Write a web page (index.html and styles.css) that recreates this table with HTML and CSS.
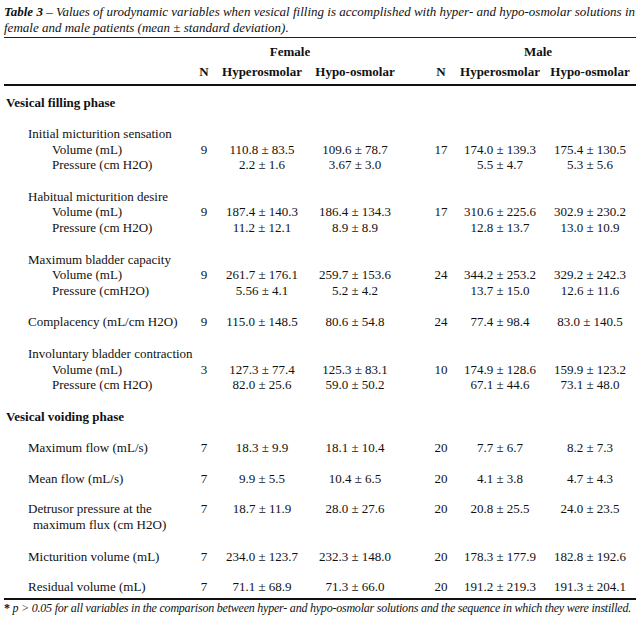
FILE: index.html
```html
<!DOCTYPE html>
<html lang="en">
<head>
<meta charset="utf-8">
<title>Table 3</title>
<link rel="stylesheet" href="styles.css">
</head>
<body>
<div class="page">
  <p class="caption"><b>Table 3</b> – Values of urodynamic variables when vesical filling is accomplished with hyper- and hypo-osmolar solutions in female and male patients (mean ± standard deviation).</p>
  <table class="data">
    <colgroup>
      <col class="c-label"><col class="c-n"><col class="c-hyper"><col class="c-hypo"><col class="c-sp"><col class="c-n2"><col class="c-hyper2"><col class="c-hypo2">
    </colgroup>
    <thead>
      <tr class="h1">
        <th></th>
        <th class="female" colspan="3">Female</th>
        <th></th>
        <th class="male" colspan="3">Male</th>
      </tr>
      <tr class="h2">
        <th></th>
        <th>N</th><th>Hyperosmolar</th><th>Hypo-osmolar</th>
        <th></th>
        <th>N</th><th>Hyperosmolar</th><th>Hypo-osmolar</th>
      </tr>
    </thead>
    <tbody>
      <tr class="section first"><td colspan="8">Vesical filling phase</td></tr>

      <tr class="start"><td class="grp" colspan="8">Initial micturition sensation</td></tr>
      <tr><td class="sub">Volume (mL)</td><td>9</td><td>110.8 ± 83.5</td><td>109.6 ± 78.7</td><td></td><td>17</td><td>174.0 ± 139.3</td><td>175.4 ± 130.5</td></tr>
      <tr><td class="sub">Pressure (cm H2O)</td><td></td><td>2.2 ± 1.6</td><td>3.67 ± 3.0</td><td></td><td></td><td>5.5 ± 4.7</td><td>5.3 ± 5.6</td></tr>

      <tr class="start"><td class="grp" colspan="8">Habitual micturition desire</td></tr>
      <tr><td class="sub">Volume (mL)</td><td>9</td><td>187.4 ± 140.3</td><td>186.4 ± 134.3</td><td></td><td>17</td><td>310.6 ± 225.6</td><td>302.9 ± 230.2</td></tr>
      <tr><td class="sub">Pressure (cm H2O)</td><td></td><td>11.2 ± 12.1</td><td>8.9 ± 8.9</td><td></td><td></td><td>12.8 ± 13.7</td><td>13.0 ± 10.9</td></tr>

      <tr class="start"><td class="grp" colspan="8">Maximum bladder capacity</td></tr>
      <tr><td class="sub">Volume (mL)</td><td>9</td><td>261.7 ± 176.1</td><td>259.7 ± 153.6</td><td></td><td>24</td><td>344.2 ± 253.2</td><td>329.2 ± 242.3</td></tr>
      <tr><td class="sub">Pressure (cmH2O)</td><td></td><td>5.56 ± 4.1</td><td>5.2 ± 4.2</td><td></td><td></td><td>13.7 ± 15.0</td><td>12.6 ± 11.6</td></tr>

      <tr class="start"><td class="grp">Complacency (mL/cm H2O)</td><td>9</td><td>115.0 ± 148.5</td><td>80.6 ± 54.8</td><td></td><td>24</td><td>77.4 ± 98.4</td><td>83.0 ± 140.5</td></tr>

      <tr class="start"><td class="grp" colspan="8">Involuntary bladder contraction</td></tr>
      <tr><td class="sub">Volume (mL)</td><td>3</td><td>127.3 ± 77.4</td><td>125.3 ± 83.1</td><td></td><td>10</td><td>174.9 ± 128.6</td><td>159.9 ± 123.2</td></tr>
      <tr><td class="sub">Pressure (cm H2O)</td><td></td><td>82.0 ± 25.6</td><td>59.0 ± 50.2</td><td></td><td></td><td>67.1 ± 44.6</td><td>73.1 ± 48.0</td></tr>

      <tr class="section start"><td colspan="8">Vesical voiding phase</td></tr>

      <tr class="start"><td class="grp">Maximum flow (mL/s)</td><td>7</td><td>18.3 ± 9.9</td><td>18.1 ± 10.4</td><td></td><td>20</td><td>7.7 ± 6.7</td><td>8.2 ± 7.3</td></tr>
      <tr class="tight"><td class="grp">Mean flow (mL/s)</td><td>7</td><td>9.9 ± 5.5</td><td>10.4 ± 6.5</td><td></td><td>20</td><td>4.1 ± 3.8</td><td>4.7 ± 4.3</td></tr>
      <tr class="tight"><td class="grp hang">Detrusor pressure at the<br>maximum flux (cm H2O)</td><td>7</td><td>18.7 ± 11.9</td><td>28.0 ± 27.6</td><td></td><td>20</td><td>20.8 ± 25.5</td><td>24.0 ± 23.5</td></tr>
      <tr class="tight"><td class="grp">Micturition volume (mL)</td><td>7</td><td>234.0 ± 123.7</td><td>232.3 ± 148.0</td><td></td><td>20</td><td>178.3 ± 177.9</td><td>182.8 ± 192.6</td></tr>
      <tr class="tight last"><td class="grp">Residual volume (mL)</td><td>7</td><td>71.1 ± 68.9</td><td>71.3 ± 66.0</td><td></td><td>20</td><td>191.2 ± 219.3</td><td>191.3 ± 204.1</td></tr>
    </tbody>
  </table>
  <p class="note"><b>*</b> p &gt; 0.05 for all variables in the comparison between hyper- and hypo-osmolar solutions and the sequence in which they were instilled.</p>
</div>
</body>
</html>
```

FILE: styles.css
```css
html, body {
  margin: 0;
  padding: 0;
  background: #ffffff;
}

body {
  font-family: "Liberation Serif", "Times New Roman", serif;
  color: #111111;
}

.page {
  width: 632px;
  padding: 3.5px 4px 0 4px;
}

.caption {
  margin: 0;
  font-style: italic;
  font-size: 13px;
  line-height: 16.5px;
}

.caption b {
  font-weight: bold;
}

.data {
  width: 632px;
  border-collapse: collapse;
  table-layout: fixed;
  border-top: 1.5px solid #222222;
  border-bottom: 2px solid #111111;
  font-size: 13px;
}

.c-label { width: 186px; }
.c-n { width: 28px; }
.c-hyper { width: 88px; }
.c-hypo { width: 98px; }
.c-sp { width: 22px; }
.c-n2 { width: 30px; }
.c-hyper2 { width: 88px; }
.c-hypo2 { width: 92px; }

.data th {
  font-weight: bold;
  text-align: center;
  padding: 0;
  line-height: 20px;
  white-space: nowrap;
}

.data .h1 th {
  padding-top: 4px;
}

.data .h1 th.female {
  padding-right: 14px;
}

.data .h1 th.male {
  padding-left: 14px;
}

.data .h2 th {
  padding-bottom: 2px;
  border-bottom: 2px solid #111111;
}

.data td {
  padding: 0;
  line-height: 15.6px;
  text-align: center;
  white-space: nowrap;
  vertical-align: top;
}

.data td:first-child {
  text-align: left;
}

.data .section td {
  font-weight: bold;
  padding-left: 2px;
}

.data .section.first td {
  padding-top: 9px;
}

.data .start td {
  padding-top: 16px;
}

.data .tight td {
  padding-top: 14.6px;
}

.data .last td {
  padding-bottom: 4px;
}

.data td.grp {
  padding-left: 24px;
}

.data td.sub {
  padding-left: 48px;
}

.data td.hang {
  line-height: 16.6px;
  padding-left: 29px;
  text-indent: -5px;
}

.note {
  margin: 0;
  padding-top: 1px;
  font-style: italic;
  font-size: 12px;
  line-height: 14px;
  letter-spacing: -0.22px;
  white-space: nowrap;
}

.note b {
  font-style: normal;
}
```
